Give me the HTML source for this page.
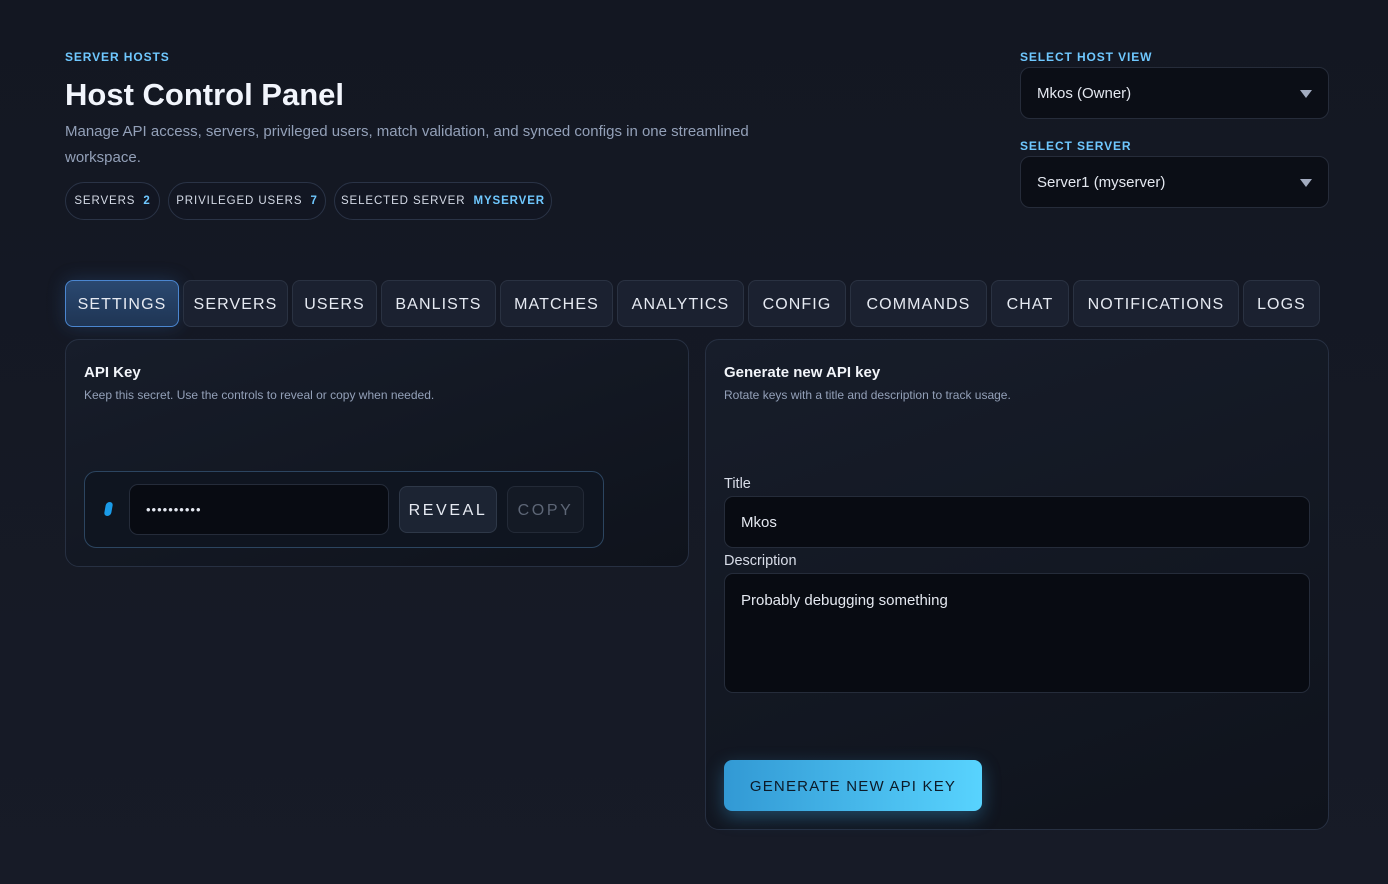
<!DOCTYPE html>
<html><head><meta charset="utf-8"><style>
*{box-sizing:border-box;margin:0;padding:0}
body{width:1388px;height:884px;overflow:hidden;background:linear-gradient(180deg,#131722 0%,#171b27 100%);font-family:"Liberation Sans",sans-serif;color:#e8edf7;position:relative}
.a{position:absolute;white-space:nowrap}
.eyebrow{font-size:12px;font-weight:bold;color:#6fc8ff;letter-spacing:.9px}
h1{font-size:31px;font-weight:bold;color:#f2f5fc}
.desc{font-size:15px;color:#93a0b8;line-height:26px;white-space:normal}
.pill{height:38px;border:1px solid #2a3346;border-radius:19px;font-size:11.5px;letter-spacing:.9px;color:#d4dae6;display:flex;align-items:center;justify-content:center;background:#121622}
.pill b{color:#6fc8ff;margin-left:8px}
.sel{width:309px;height:52px;background:#0b0e16;border:1px solid #262c3a;border-radius:10px;font-size:15px;color:#e4e8f0;padding:0 16px;display:flex;align-items:center}
.sel:after{content:"";position:absolute;right:16px;top:22px;border-left:6px solid transparent;border-right:6px solid transparent;border-top:8px solid #a3acc0}
.tab{top:280px;height:47px;border:1px solid #2a3242;border-radius:8px;background:#1b2130;font-size:16px;letter-spacing:1.1px;color:#e6eaf2;display:flex;align-items:center;justify-content:center;padding-top:2px}
.tab.on{background:linear-gradient(180deg,#2a4870,#1f3554);border-color:#4b86d0;box-shadow:0 0 18px rgba(60,120,200,.25)}
.card{background:linear-gradient(160deg,#171d2a,#0f131c);border:1px solid #273042;border-radius:14px}
.ct{font-size:15px;font-weight:bold;color:#f2f5fa}
.cs{font-size:12px;color:#93a0b8}
.inp{background:#080b12;border:1px solid #252c3a;border-radius:9px;font-size:15px;color:#e4e8f0;padding:0 16px;display:flex;align-items:center}
.lbl{font-size:14.5px;color:#d8dde8}
.btn{border:1px solid #2e3848;border-radius:8px;font-size:16px;letter-spacing:2.6px;display:flex;align-items:center;justify-content:center;padding-top:2px}
</style></head><body>
<div class="a eyebrow" style="left:65px;top:50px">SERVER HOSTS</div>
<h1 class="a" style="left:65px;top:77px">Host Control Panel</h1>
<div class="a desc" style="left:65px;top:119px;width:720px">Manage API access, servers, privileged users, match validation, and synced configs in one streamlined workspace.</div>
<div class="a pill" style="left:65px;top:182px;width:95px">SERVERS<b>2</b></div>
<div class="a pill" style="left:168px;top:182px;width:158px">PRIVILEGED USERS<b>7</b></div>
<div class="a pill" style="left:334px;top:182px;width:218px">SELECTED SERVER<b>MYSERVER</b></div>

<div class="a eyebrow" style="left:1020px;top:50px">SELECT HOST VIEW</div>
<div class="a sel" style="left:1020px;top:67px">Mkos (Owner)</div>
<div class="a eyebrow" style="left:1020px;top:139px">SELECT SERVER</div>
<div class="a sel" style="left:1020px;top:156px">Server1 (myserver)</div>

<div class="a tab on" style="left:65px;width:114px">SETTINGS</div>
<div class="a tab" style="left:183px;width:105px">SERVERS</div>
<div class="a tab" style="left:292px;width:85px">USERS</div>
<div class="a tab" style="left:381px;width:115px">BANLISTS</div>
<div class="a tab" style="left:500px;width:113px">MATCHES</div>
<div class="a tab" style="left:617px;width:127px">ANALYTICS</div>
<div class="a tab" style="left:748px;width:98px">CONFIG</div>
<div class="a tab" style="left:850px;width:137px">COMMANDS</div>
<div class="a tab" style="left:991px;width:78px">CHAT</div>
<div class="a tab" style="left:1073px;width:166px">NOTIFICATIONS</div>
<div class="a tab" style="left:1243px;width:77px">LOGS</div>

<div class="a card" style="left:65px;top:339px;width:624px;height:228px"></div>
<div class="a ct" style="left:84px;top:364px">API Key</div>
<div class="a cs" style="left:84px;top:388px">Keep this secret. Use the controls to reveal or copy when needed.</div>
<div class="a" style="left:84px;top:471px;width:520px;height:77px;border:1px solid #2c4560;border-radius:12px;background:#0f1520"></div>
<div class="a" style="left:105px;top:502px;width:7px;height:14px;border-radius:4px;background:#1a9be8;transform:skewX(-10deg)"></div>
<div class="a inp" style="left:129px;top:484px;width:260px;height:51px;font-size:13px;letter-spacing:1px">••••••••••</div>
<div class="a btn" style="left:399px;top:486px;width:98px;height:47px;background:#1c2433;color:#e6eaf2">REVEAL</div>
<div class="a btn" style="left:507px;top:486px;width:77px;height:47px;background:#141a25;color:#5d6676;border-color:#232a37">COPY</div>

<div class="a card" style="left:705px;top:339px;width:624px;height:491px"></div>
<div class="a ct" style="left:724px;top:364px">Generate new API key</div>
<div class="a cs" style="left:724px;top:388px">Rotate keys with a title and description to track usage.</div>
<div class="a lbl" style="left:724px;top:476px">Title</div>
<div class="a inp" style="left:724px;top:496px;width:586px;height:52px">Mkos</div>
<div class="a lbl" style="left:724px;top:553px">Description</div>
<div class="a inp" style="left:724px;top:573px;width:586px;height:120px;align-items:flex-start;padding-top:18px">Probably debugging something</div>
<div class="a" style="left:724px;top:760px;width:258px;height:51px;border-radius:8px;background:linear-gradient(90deg,#3299d4,#58d3fe);box-shadow:0 6px 18px rgba(60,170,230,.35);color:#0c1a28;font-size:15px;letter-spacing:1.2px;display:flex;align-items:center;justify-content:center;padding-top:2px">GENERATE NEW API KEY</div>
</body></html>
